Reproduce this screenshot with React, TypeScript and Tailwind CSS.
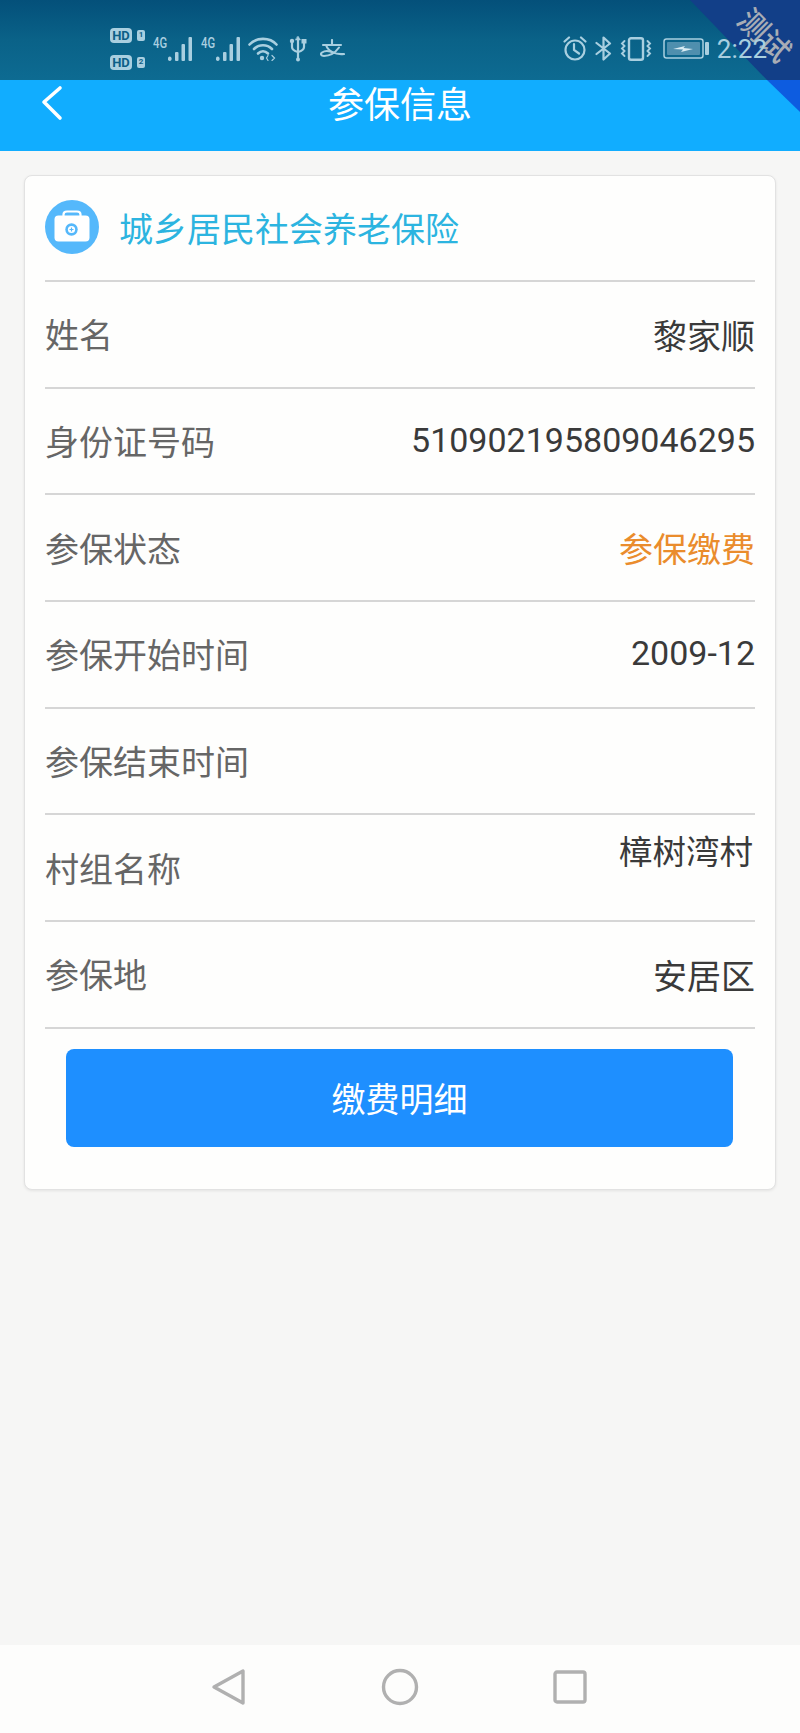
import React from "react";

const CJK = "font-['Noto_Sans_CJK_SC','Noto_Sans',sans-serif]";
const ICON = "#a9cfe0";

function Signal() {
  return (
    <div className="flex items-start">
      <span className="w-[14px] origin-left scale-x-75 font-['Roboto',sans-serif] text-[15px] font-medium leading-[12px] text-[#a9cfe0]">4G</span>
      <svg width="26" height="24" viewBox="0 0 26 24">
        <g fill={ICON}>
          <rect x="1" y="19.5" width="3.5" height="4.5" rx="1.7" />
          <rect x="8" y="15" width="3.5" height="9" rx="1" />
          <rect x="14.5" y="7" width="3.5" height="17" rx="1" />
          <rect x="21.5" y="0" width="3.5" height="24" rx="1" />
        </g>
      </svg>
    </div>
  );
}

function HD({ n }: { n: string }) {
  return (
    <div className="flex h-[16px] items-center gap-[5px]">
      <span className="flex h-[15px] w-[22px] items-center justify-center rounded-[4px] bg-[#a9cfe0] font-['Roboto',sans-serif] text-[13px] font-bold leading-none text-[#0d5f87]">HD</span>
      <span className="flex h-[11px] w-[8px] items-center justify-center rounded-[2px] bg-[#a9cfe0] font-['Roboto',sans-serif] text-[8px] font-bold leading-none text-[#0d5f87]">{n}</span>
    </div>
  );
}

function StatusBar() {
  return (
    <div className="flex h-20 items-center bg-gradient-to-b from-[#04507a] via-[#0a6288] to-[#0d6b92] pl-[110px] pr-[33px] pt-[17px]">
      <div className="flex flex-col gap-[11px]">
        <HD n="1" />
        <HD n="2" />
      </div>
      <div className="ml-[8px] flex items-start gap-[8px]">
        <Signal />
        <Signal />
      </div>
      <svg width="30" height="24" viewBox="0 0 30 24" className="ml-[7px]" fill="none" stroke={ICON} strokeWidth="2.6" strokeLinecap="round">
        <path d="M1.5 7.5 C8 0 22 0 28.5 7.5" />
        <path d="M6 12 C11 7 19 7 24 12" />
        <path d="M10 16.5 C13 13.5 17 13.5 20 16.5" />
        <circle cx="14" cy="21" r="2.2" fill={ICON} stroke="none" />
        <path d="M24 18.5 l2.5 2.5 -2.5 2.5" strokeWidth="1.2" />
        <path d="M20 18.5 l-1.5 2.5 1.5 2.5" strokeWidth="1.2" />
      </svg>
      <svg width="18" height="26" viewBox="0 0 18 26" className="ml-[11px]" fill="none" stroke={ICON} strokeWidth="2.2" strokeLinecap="round">
        <path d="M9 3 V24" />
        <path d="M6.5 4 h5 L9 0 Z" fill={ICON} strokeWidth="0.5" />
        <path d="M3 7 V11 C3 14 5.5 15 9 16 C12.5 15 15 14 15 11 V7" />
        <circle cx="3" cy="5" r="2.2" fill={ICON} stroke="none" />
        <rect x="12.5" y="3" width="5" height="4.5" fill={ICON} stroke="none" />
        <circle cx="9" cy="23.5" r="2" fill={ICON} stroke="none" />
      </svg>
      <svg width="25" height="19" viewBox="0 0 25 19" className="ml-[13px]" fill="none" stroke={ICON} strokeWidth="2.1" strokeLinecap="round" strokeLinejoin="round">
        <path d="M12 1 V6" />
        <path d="M3 6 H21" />
        <path d="M6 6 C8 12 15 16 24 15" />
        <path d="M19 8.5 C15 14 9 17 4 17 C1 17 0 15 2 13.5 C5 11.5 10 12 14 14" />
      </svg>
      <div className="relative z-20 ml-auto flex items-center">
        <svg width="24" height="25" viewBox="0 0 24 25" fill="none" stroke={ICON} strokeWidth="2.2" strokeLinecap="round">
          <circle cx="12" cy="14" r="9.5" />
          <path d="M11 8 V14 L16 17.5" />
          <path d="M1.5 5.5 L6 1.5 M22.5 5.5 L18 1.5" />
        </svg>
        <svg width="17" height="25" viewBox="0 0 17 25" className="ml-[8px]" fill="none" stroke={ICON} strokeWidth="2.2" strokeLinejoin="round" strokeLinecap="round">
          <path d="M1.5 7 L15 17.5 L8.5 23.5 V1.5 L15 7.5 L1.5 18" />
        </svg>
        <svg width="32" height="24" viewBox="0 0 32 24" className="ml-[8px]" fill="none" stroke={ICON} strokeWidth="1.9" strokeLinecap="round">
          <rect x="9" y="1.2" width="14" height="21.6" rx="2" strokeWidth="2.4" />
          <path d="M4.5 4 l-2.5 2.5 2.5 2.5 -2.5 2.5 2.5 2.5 -2.5 2.5 2.5 2.5" />
          <path d="M27.5 4 l2.5 2.5 -2.5 2.5 2.5 2.5 -2.5 2.5 2.5 2.5 -2.5 2.5" />
        </svg>
        <svg width="46" height="21" viewBox="0 0 46 21" className="ml-[11px]">
          <rect x="1" y="1" width="39" height="19" rx="2.5" fill="none" stroke={ICON} strokeWidth="1.5" />
          <rect x="4" y="4" width="33" height="13" rx="1" fill="#4f8fae" />
          <path d="M10 11 L22 8 L20.5 10 L30 11 L18 14 L20 11.5 Z" fill="#d9ecf4" />
          <rect x="42" y="4" width="4" height="13" rx="1" fill={ICON} />
        </svg>
        <span className="ml-[8px] font-['Roboto',sans-serif] text-[26px] leading-none text-[#a9cfe0]">2:22</span>
      </div>
    </div>
  );
}

function Row({ label, value, cjk = true, valueClass = "text-[#3a3a3a]" }: { label: string; value?: string; cjk?: boolean; valueClass?: string }) {
  return (
    <div className={`flex h-[106.7px] items-center justify-between border-b-2 border-[#d6d6d6] ${CJK} text-[34px] leading-none`}>
      <span className="text-[#666666]">{label}</span>
      {value ? (
        cjk ? (
          <span className={`mt-[1px] ${valueClass}`}>{value}</span>
        ) : (
          <span className={`mb-[3px] font-['Roboto',sans-serif] ${valueClass}`}>{value}</span>
        )
      ) : null}
    </div>
  );
}

export default function App() {
  return (
    <div className="relative flex h-[1733px] w-[800px] flex-col overflow-hidden bg-[#f6f6f5]">
      <StatusBar />
      <header className={`flex h-[71px] items-start bg-[#11adff] ${CJK}`}>
        <svg width="24" height="38" viewBox="0 0 24 38" className="ml-[40px] mt-[5px]" fill="none" stroke="#ffffff" strokeWidth="3.6" strokeLinecap="round" strokeLinejoin="round">
          <path d="M20 3 L4 17 L20 33" />
        </svg>
        <h1 className="ml-[264px] mt-[2px] text-[36px] leading-[40px] text-white">参保信息</h1>
      </header>

      <main className="mx-6 mt-6 h-[1015px] rounded-[8px] border border-[#e2e2e2] bg-[#fefefd] px-[20px] shadow-[0_1px_3px_rgba(0,0,0,0.08)]">
        <div className={`flex h-[106px] items-center border-b-2 border-[#d6d6d6] ${CJK}`}>
          <svg width="54" height="54" viewBox="0 0 54 54" className="mb-[3px]">
            <circle cx="27" cy="27" r="27" fill="#55b8fb" />
            <path d="M18.5 16 V14.5 C18.5 12.5 20 11.5 22 11.5 H32 C34 11.5 35.5 12.5 35.5 14.5 V16" fill="none" stroke="#ffffff" strokeWidth="2.2" />
            <rect x="9.5" y="15.5" width="35" height="26" rx="4" fill="#ffffff" />
            <circle cx="26.5" cy="29.5" r="6.2" fill="#55b8fb" />
            <circle cx="26.5" cy="29.5" r="3.6" fill="#ffffff" />
            <path d="M26.5 27.5 V31.5 M24.5 29.5 H28.5" stroke="#55b8fb" strokeWidth="1.2" />
          </svg>
          <span className="ml-[20px] text-[34px] leading-none text-[#2cb4e0]">城乡居民社会养老保险</span>
        </div>
        <Row label="姓名" value="黎家顺" />
        <Row label="身份证号码" value="510902195809046295" cjk={false} />
        <Row label="参保状态" value="参保缴费" valueClass="text-[#ea8c2c]" />
        <Row label="参保开始时间" value="2009-12" cjk={false} />
        <Row label="参保结束时间" />
        <div className={`flex h-[106.7px] items-center justify-between border-b-2 border-[#d6d6d6] ${CJK} text-[34px] leading-none`}>
          <span className="mt-[1px] text-[#666666]">村组名称</span>
          <span className="mb-[36px] mr-[2px] text-[33.5px] text-[#3a3a3a]">樟树湾村</span>
        </div>
        <Row label="参保地" value="安居区" />
        <button className={`ml-[21px] mt-[20px] flex h-[98px] w-[667px] items-center justify-center rounded-[8px] bg-[#1e8fff] ${CJK} text-[34px] leading-none text-white`}>
          缴费明细
        </button>
      </main>

      <nav className="mt-auto flex h-[88px] items-center justify-center bg-[#fdfdfc] pb-[4px] pr-[3px]">
        <svg width="36" height="38" viewBox="0 0 36 38" fill="none" stroke="#b0b0b0" strokeWidth="3.4" strokeLinejoin="round">
          <path d="M32 3 V35 L3 19 Z" />
        </svg>
        <svg width="38" height="38" viewBox="0 0 38 38" className="ml-[134px]" fill="none" stroke="#b0b0b0" strokeWidth="3.4">
          <circle cx="19" cy="19" r="16.5" />
        </svg>
        <svg width="34" height="34" viewBox="0 0 34 34" className="ml-[134px]" fill="none" stroke="#b0b0b0" strokeWidth="3.4" strokeLinejoin="round">
          <rect x="2" y="2" width="30" height="30" rx="2" />
        </svg>
      </nav>

      <div className="absolute right-0 top-0 z-10 h-[112px] w-[112px]">
        <svg width="112" height="112" viewBox="0 0 112 112" className="absolute inset-0">
          <path d="M2 0 H112 V80 H79 Z" fill="#123f88" />
          <path d="M79 80 H112 V112 Z" fill="#0d5ce0" />
        </svg>
        <span className={`absolute left-[48px] top-[19px] rotate-45 whitespace-nowrap ${CJK} text-[30px] font-medium leading-none text-[#a8adb5]`}>测试</span>
      </div>
    </div>
  );
}
